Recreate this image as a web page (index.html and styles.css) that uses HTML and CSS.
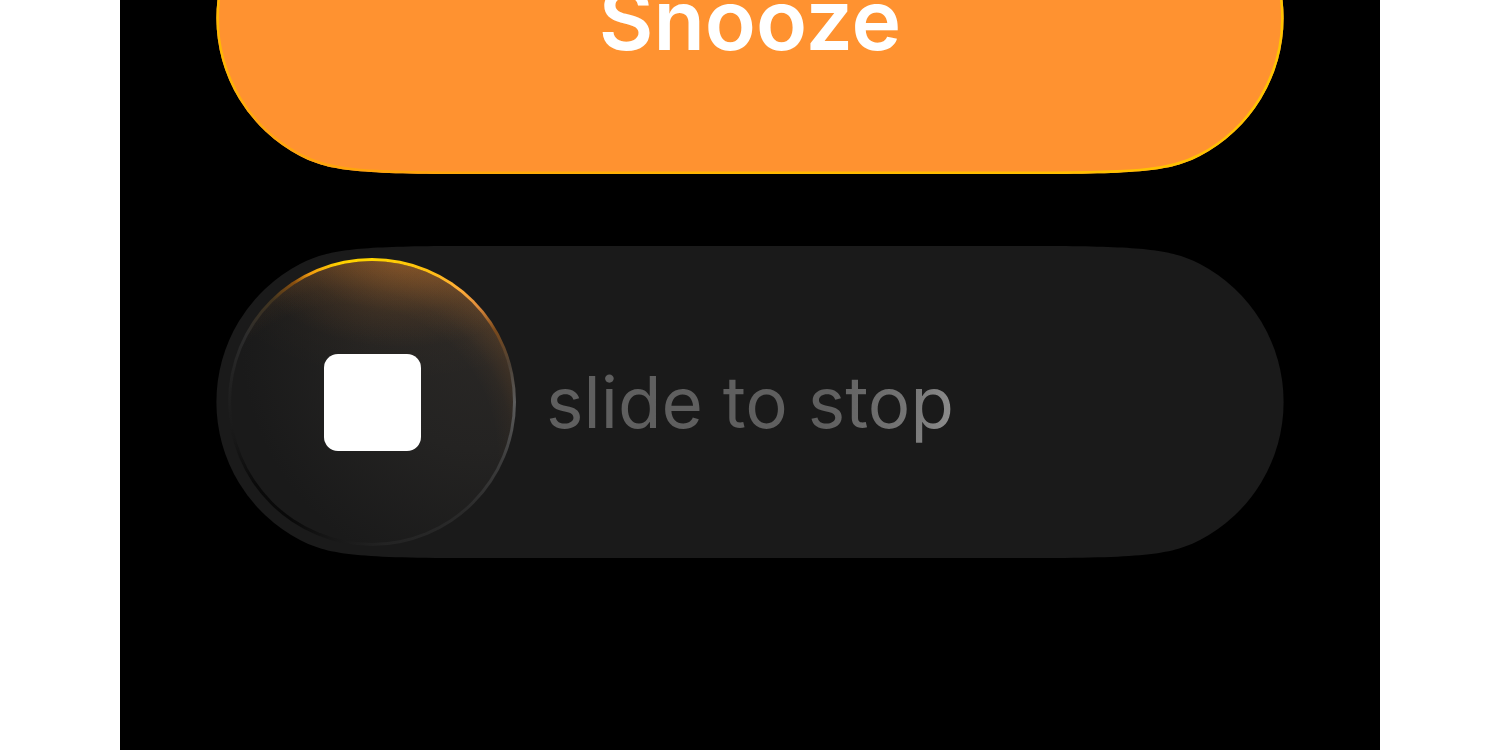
FILE: index.html
```html
<!DOCTYPE html>
<html lang="en">
<head>
<meta charset="utf-8">
<title>Alarm</title>
<link rel="stylesheet" href="styles.css">
</head>
<body>
<main class="screen">
  <button class="pill snooze" type="button">
    <svg class="shape" viewBox="0 0 1068 312" preserveAspectRatio="none" aria-hidden="true">
      <defs>
        <path id="capsule" d="M248 0H820C930 0 957 4 984 18A155.7 155.7 0 0 1 984 294C957 308 930 312 820 312H248C138 312 111 308 84 294A155.7 155.7 0 0 1 84 18C111 4 138 0 248 0Z"/>
        <clipPath id="capsule-clip"><use href="#capsule"/></clipPath>
        <linearGradient id="rim">
          <stop offset="0" stop-color="#ffba00"/>
          <stop offset="0.04" stop-color="#ffa50c"/>
          <stop offset="0.2" stop-color="#ffa50c"/>
          <stop offset="0.5" stop-color="#ffb800"/>
          <stop offset="1" stop-color="#ffc400"/>
        </linearGradient>
      </defs>
      <use href="#capsule" fill="#ff9230"/>
      <use href="#capsule" fill="none" stroke="url(#rim)" stroke-width="5" clip-path="url(#capsule-clip)"/>
    </svg>
    <span class="snooze-text">Snooze</span>
  </button>
  <div class="pill slider">
    <svg class="shape" viewBox="0 0 1068 312" preserveAspectRatio="none" aria-hidden="true">
      <use href="#capsule" fill="#1a1a1a"/>
    </svg>
    <div class="knob" aria-hidden="true"><span class="stop"></span></div>
    <label class="slider-text" for="stop">slide to stop</label>
    <input class="range" id="stop" type="range" min="0" max="100" value="0">
  </div>
</main>
</body>
</html>
```

FILE: styles.css
```css
body {
  margin: 0;
  background: #fff;
  font-family: Inter, "Liberation Sans", sans-serif;
}

.screen {
  box-sizing: border-box;
  display: flex;
  flex-direction: column;
  justify-content: flex-end;
  gap: 72px;
  width: 84%;
  height: 100vh;
  margin: 0 auto;
  padding: 0 96px 192px;
  overflow: hidden;
  background: #000;
}

.pill {
  position: relative;
  box-sizing: border-box;
  flex: none;
  height: 312px;
  isolation: isolate;
}

.shape {
  position: absolute;
  inset: 0;
  z-index: -1;
  width: 100%;
  height: 100%;
}

.snooze {
  padding: 4px 0 0;
  border: 0;
  background: none;
  color: #fff;
  font-family: inherit;
  font-size: 84px;
  font-weight: 600;
  line-height: 104px;
}

.slider {
  display: grid;
  grid-template-columns: 1fr;
  align-items: center;
  padding: 12px;
}

.knob {
  box-sizing: border-box;
  display: flex;
  grid-area: 1 / 1;
  align-items: center;
  justify-content: center;
  width: 288px;
  height: 288px;
  border: 3px solid transparent;
  border-radius: 50%;
  background:
    radial-gradient(150px 90px at 170px -4px, rgb(255 146 48 / 0.28), rgb(255 146 48 / 0.19) 32%, rgb(255 146 48 / 0.07) 64%, rgb(255 146 48 / 0)) padding-box,
    radial-gradient(circle at 116px 194px, rgb(255 146 48 / 0) 150px, rgb(255 146 48 / 0.03) 166px, rgb(255 146 48 / 0.09) 180px, rgb(255 146 48 / 0.18) 200px) padding-box,
    radial-gradient(200px 120px at 170px 0, rgb(255 146 48 / 0.06), rgb(255 146 48 / 0)) padding-box,
    radial-gradient(circle at 250px 80px, #292725, #242322 110px, #1a1a1a 240px) padding-box,
    conic-gradient(#ffd400, #ffc010 22deg, #ffad38 38deg, #e08c3c 48deg, #79491c 60deg, #4c4136 75deg, #5c5c5c 90deg, #3c3c3c 115deg, #2a2a2a 140deg, #232323 175deg, #181818 195deg, #090909 215deg, #0a0a0a 235deg, #181818 255deg, #202020 275deg, #2c2c2c 298deg, #43351f 316deg, #8a500f 327deg, #f09a10 334deg, #ffd000 346deg, #ffd400) border-box;
}

.stop {
  width: 97px;
  height: 97px;
  border-radius: 14px;
  background: #fff;
}

.slider-text {
  grid-area: 1 / 1;
  justify-self: center;
  background: linear-gradient(100deg, #5f5f5f 68%, #767676 88%, #909090);
  background-clip: text;
  color: transparent;
  font-size: 71px;
  line-height: 92px;
}

.range {
  grid-area: 1 / 1;
  width: 100%;
  height: 288px;
  margin: 0;
  appearance: none;
  background: transparent;
  cursor: pointer;
}

.range::-webkit-slider-thumb {
  width: 288px;
  height: 288px;
  appearance: none;
  border-radius: 50%;
  background: transparent;
}
```
